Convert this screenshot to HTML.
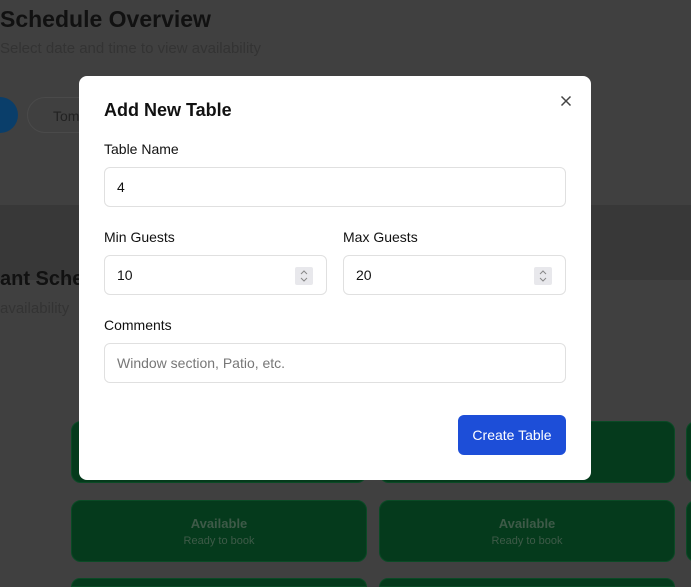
<!DOCTYPE html>
<html style="width:691px;height:587px;overflow:hidden"><head><style>
*{box-sizing:border-box;margin:0;padding:0}
body{width:691px;height:587px;overflow:hidden;font-family:"Liberation Sans",sans-serif;background:#404040;position:relative}
.abs{position:absolute}
.card{position:absolute;background:#053a1c;border-radius:10px;border:1px solid #0a4a25;text-align:center;color:#3e5a48}
.card b{display:block;font-size:13px;margin-top:15px}
.card span{font-size:11px}
.modal{position:absolute;left:79px;top:76px;width:512px;height:404px;background:#fff;border-radius:8px}
.lbl{position:absolute;font-size:14px;color:#111}
.inp{position:absolute;height:40px;border:1px solid #e0e0e0;border-radius:6px;font-size:14px;color:#111;padding:11px 12px}
.spin{position:absolute;right:13px;top:11px;width:18px;height:18px;background:#e8e8ec;border-radius:2px}
</style></head><body>
<div class="abs" style="left:0;top:205px;width:691px;height:75px;background:#383838"></div>
<div class="abs" style="left:0;top:6px;font-size:23px;font-weight:bold;color:#111">Schedule Overview</div>
<div class="abs" style="left:0;top:40px;font-size:15px;color:#333">Select date and time to view availability</div>
<div class="abs" style="left:-20px;top:97px;width:38px;height:36px;border-radius:18px;background:#0a3e6a"></div>
<div class="abs" style="left:27px;top:97px;width:80px;height:36px;border-radius:18px;border:1px solid #4a4a4a;color:#222;font-size:14px;padding:10px 25px">Tom</div>
<div class="abs" style="left:0;top:268px;font-size:20px;font-weight:bold;color:#111">ant Sche</div>
<div class="abs" style="left:0;top:300px;font-size:15px;color:#333">availability</div>
<div class="card" style="left:71px;top:421px;width:296px;height:62px"></div>
<div class="card" style="left:379px;top:421px;width:296px;height:62px"></div>
<div class="card" style="left:686px;top:421px;width:20px;height:62px"></div>
<div class="card" style="left:71px;top:500px;width:296px;height:62px"><b>Available</b><span>Ready to book</span></div>
<div class="card" style="left:379px;top:500px;width:296px;height:62px"><b>Available</b><span>Ready to book</span></div>
<div class="card" style="left:686px;top:500px;width:20px;height:62px"></div>
<div class="card" style="left:71px;top:578px;width:296px;height:9px;border-bottom-left-radius:0;border-bottom-right-radius:0"></div>
<div class="card" style="left:379px;top:578px;width:296px;height:9px;border-bottom-left-radius:0;border-bottom-right-radius:0"></div>
<div class="modal">
<div class="abs" style="left:25px;top:24px;font-size:18px;font-weight:bold;color:#111">Add New Table</div>
<svg class="abs" style="left:481px;top:19px" width="12" height="12" viewBox="0 0 12 12"><path d="M1.5 1.5L10.5 10.5M10.5 1.5L1.5 10.5" stroke="#444" stroke-width="1.5"/></svg>
<div class="lbl" style="left:25px;top:65px">Table Name</div>
<div class="inp" style="left:25px;top:91px;width:462px">4</div>
<div class="lbl" style="left:25px;top:153px">Min Guests</div>
<div class="inp" style="left:25px;top:179px;width:223px">10<div class="spin"><svg width="18" height="18" viewBox="0 0 18 18"><path d="M6 7L9 4L12 7M6 11L9 14L12 11" stroke="#888" fill="none"/></svg></div></div>
<div class="lbl" style="left:264px;top:153px">Max Guests</div>
<div class="inp" style="left:264px;top:179px;width:223px">20<div class="spin"><svg width="18" height="18" viewBox="0 0 18 18"><path d="M6 7L9 4L12 7M6 11L9 14L12 11" stroke="#888" fill="none"/></svg></div></div>
<div class="lbl" style="left:25px;top:241px">Comments</div>
<div class="inp" style="left:25px;top:267px;width:462px;color:#777">Window section, Patio, etc.</div>
<div class="abs" style="left:379px;top:339px;width:108px;height:40px;background:#1d4ed8;border-radius:6px;color:#fff;font-size:14px;text-align:center;line-height:40px">Create Table</div>
</div>
</body></html>
